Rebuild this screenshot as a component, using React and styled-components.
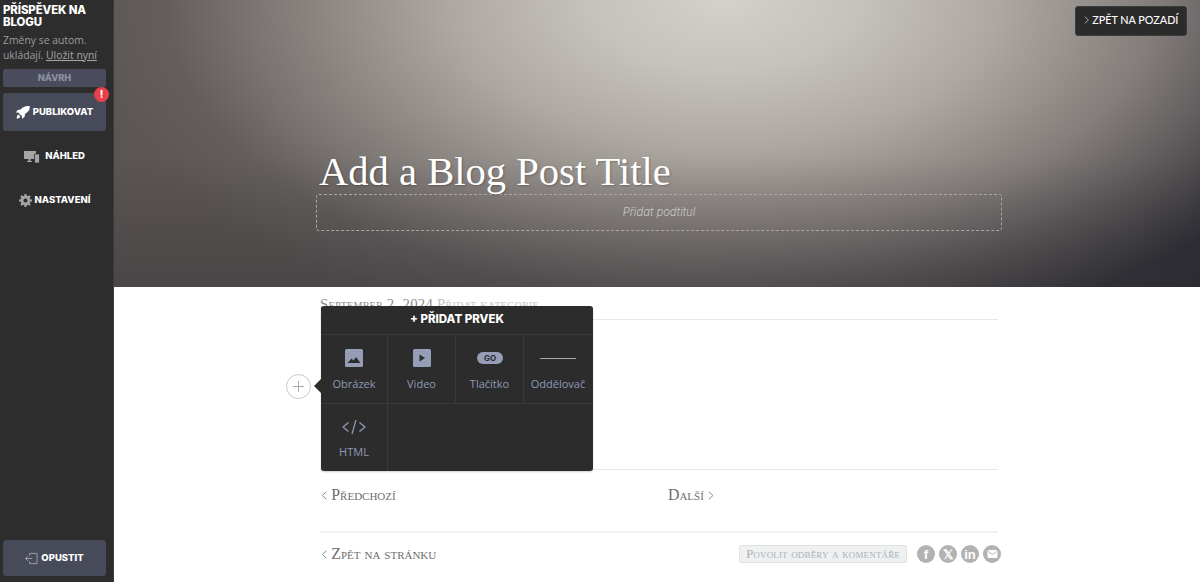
import React from "react";
import styled, { createGlobalStyle } from "styled-components";

const Global = createGlobalStyle`
  html, body { margin: 0; padding: 0; background: #fff; overflow: hidden; }
  * { box-sizing: border-box; }
`;
const Page = styled.div`display: flex; width: 1200px; height: 582px; overflow: hidden; font-family: "Open Sans", sans-serif;`;
const Sidebar = styled.aside`
  width: 114px; flex: none; background: #2d2d2d; border-right: 1px solid #3a3a3a; padding: 4px 3px 6px;
  display: flex; flex-direction: column;
`;
const SideTitle = styled.h1`
  margin: 0; font: 800 11.4px/12px Inter, sans-serif; color: #fff; letter-spacing: -0.1px;
`;
const AutoSave = styled.p`
  margin: 5px 0 0; font: 400 10.4px/14.5px "Open Sans", sans-serif; color: #9b9b9b;
  a { text-decoration: underline; color: #a5a5a5; }
`;
const Draft = styled.div`
  margin-top: 7px; height: 18px; width: 103px; border-radius: 2px; background: #4a4c5e; color: #8e92a3;
  font: 800 9.2px/18px Inter, sans-serif; text-align: center;
`;
const SideButton = styled.div`
  position: relative; width: 103px; display: flex; align-items: center; justify-content: center; gap: 3px;
  height: ${p => p.$h || 38}px; margin-top: ${p => p.$mt || 0}px; border-radius: 3px;
  background: ${p => (p.$filled ? "#474a58" : "transparent")};
  color: #fff; font: 800 9.5px/1 Inter, sans-serif;
`;
const Badge = styled.span`
  position: absolute; right: -3px; top: -6px; width: 15px; height: 15px; border-radius: 50%;
  background: #e8404a; color: #fff; font: 800 10px/15px Inter, sans-serif; text-align: center;
`;
const Spacer = styled.div`flex: 1;`;
const Main = styled.main`flex: 1; min-width: 0; display: flex; flex-direction: column;`;
const Hero = styled.section`
  position: relative; height: 287px; flex: none; padding: 150px 198px 0 202px;
  background:
    linear-gradient(180deg, rgba(40,38,44,0) 55%, rgba(40,38,44,0.32) 100%),
    radial-gradient(ellipse 650px 350px at 610px 0px, #d3d1cb 0%, #c6c2bc 20%, #aea8a2 42%, rgba(136,130,127,0.95) 66%, rgba(105,100,99,0.6) 86%, rgba(90,86,85,0) 100%),
    linear-gradient(90deg, #5b5553 0%, #5a5654 45%, #2e2e35 100%);
`;
const BackButton = styled.div`
  position: absolute; top: 6px; right: 13px; width: 112px; height: 30px; padding-bottom: 2px; border-radius: 3px;
  background: #2b2b2b; border: 1px solid #3c3c3c; color: #fff;
  display: flex; align-items: center; justify-content: center; gap: 3px;
  font: 500 10.8px/1 Lato, sans-serif;
`;
const Title = styled.h2`
  margin: 0 0 0 3px; font: 400 40.6px/44px "Liberation Serif", serif; color: #fff;
  text-shadow: 1px 1px 2px rgba(0,0,0,0.25);
`;
const Subtitle = styled.div`
  width: 686px; height: 37px; border: 1px dashed #a9a6a3; border-radius: 3px;
  text-align: center; font: italic 300 11.2px/35px Inter, sans-serif; color: #c8c6c4;
`;
const Content = styled.section`position: relative; flex: 1; padding: 0 202px 0 206px;`;
const Meta = styled.div`
  height: 33px; border-bottom: 1px solid #e8e8e8; padding-top: 9px;
  font: 400 14.8px/16px "Liberation Serif", serif; letter-spacing: 0.27px; font-variant: small-caps; color: #8d8d8d; white-space: nowrap;
  span { color: #c3c3c3; }
`;
const Body = styled.div`height: 150px; border-bottom: 1px solid #e8e8e8;`;
const PrevNext = styled.div`
  height: 63px; border-bottom: 2px solid #f0f0f0; display: grid; grid-template-columns: 347px 1fr; padding-top: 15px;
`;
const NavLink = styled.div`
  display: flex; align-items: center; gap: 4px; height: 20px; padding-left: 1px;
  font: 400 15.8px/20px "Liberation Serif", serif; font-variant: small-caps; color: #6e6e6e;
`;
const BottomRow = styled.div`display: flex; align-items: center; justify-content: space-between; height: 42px;`;
const Right = styled.div`display: flex; align-items: center; gap: 4px; margin-right: -3px;`;
const Allow = styled.div`
  height: 18px; padding: 0 6px; margin-right: 6px; background: #eff0f0; border: 1px solid #e0e2e2; border-radius: 2px;
  font: 400 13.2px/15px "Liberation Serif", serif; letter-spacing: 0.15px; font-variant: small-caps; color: #a9b2bc; white-space: nowrap;
`;
const Social = styled.span`
  width: 18px; height: 18px; border-radius: 50%; background: #b2b2b2; display: inline-flex; align-items: center; justify-content: center;
  color: #fff; font: 700 13px/1 "Liberation Sans", sans-serif;
`;
const PlusCircle = styled.div`
  position: absolute; left: 172px; top: 87px; width: 25px; height: 25px; border-radius: 50%; background: #fff; border: 1px solid #c9c9c9;
  display: flex; align-items: center; justify-content: center;
`;
const Popover = styled.div`
  position: absolute; left: 207px; top: 19px; width: 272px; height: 165px; background: #2c2c2c; border-radius: 3px; color: #8f99b8;
  box-shadow: 0 1px 2px rgba(0,0,0,.2);
  &::before {
    content: ""; position: absolute; left: -7px; top: 73px; border: 7px solid transparent; border-left: 0; border-right-color: #2c2c2c;
  }
`;
const PopTitle = styled.div`
  height: 29px; text-align: center; color: #fff; font: 800 11.5px/27px Inter, sans-serif; border-bottom: 1px solid #3a3a3e;
`;
const Grid = styled.div`display: grid; grid-template-columns: 67px 68px 68px 1fr; grid-template-rows: 69px 67px;`;
const Cell = styled.div`
  display: flex; flex-direction: column; align-items: center; border-right: 1px solid ${p => (p.$last ? "transparent" : "#3a3a3e")};
  border-bottom: 1px solid ${p => (p.$noBottom ? "transparent" : "#3a3a3e")}; padding-top: 14px;
`;
const IconBox = styled.div`height: 18px; padding-top: ${p => p.$pt || 0}px; display: flex; align-items: center; justify-content: center;`;
const CellLabel = styled.div`margin-top: ${p => p.$mt || 9}px; font: 400 11px/15px "Open Sans", sans-serif; color: #8f99b8; white-space: nowrap;`;
const Chev = ({ d = "l", c = "#8a8a8a", s = 9 }) => (
  <svg width={s * 0.7} height={s} viewBox="0 0 7 10" fill="none" stroke={c} strokeWidth="1.1">
    <path d={d === "l" ? "M6 .8 1.5 5 6 9.2" : "M1 .8 5.5 5 1 9.2"} />
  </svg>
);
const P = { fill: "#959db8" };

export default function App() {
  return (
    <Page>
      <Global />
      <Sidebar>
        <SideTitle>PŘÍSPĚVEK NA BLOGU</SideTitle>
        <AutoSave>Změny se autom. ukládají. <a>Uložit nyní</a></AutoSave>
        <Draft>NÁVRH</Draft>
        <SideButton $filled $h={38} $mt={6}>
          <svg width="14" height="13" viewBox="0 0 14 13" fill="#fff"><path d="M13.800.2C9.800-.4 6.600 1 4.700 3.600L1.500 4 0 6.500l2.800.3c.3 1 1.600 2.500 3 3l.4 3L8.500 11l.6-3.200c3-1.800 5-4 4.700-7.600zM2.400 8.600C1.300 9.200.7 10.500.6 12.500c1.900 0 3.200-.7 3.800-1.800z"/></svg>
          PUBLIKOVAT
          <Badge>!</Badge>
        </SideButton>
        <SideButton $h={44} $mt={3}>
          <svg width="16" height="13" viewBox="0 0 16 13" fill="#a5a5a5"><path d="M0 1h12v8H6.500v2H8v1H3v-1h1.500V9H0z"/><rect x="10.500" y="4" width="5" height="9" rx=".7" stroke="#2d2d2d" strokeWidth=".8"/></svg>
          <span style={{ marginLeft: 2 }}>NÁHLED</span>
        </SideButton>
        <SideButton $h={44}>
          <svg width="13" height="13" viewBox="0 0 14 14" fill="#a5a5a5"><path fillRule="evenodd" d="M6 0h2l.4 2 1.200.5L11.300 1.400l1.300 1.300-1.100 1.700.5 1.200 2 .4v2l-2 .4-.5 1.200 1.100 1.700-1.300 1.300-1.700-1.100-1.200.5-.4 2H6l-.4-2-1.200-.5-1.700 1.100-1.300-1.300 1.100-1.700-.5-1.200-2-.4V6l2-.4.5-1.200-1.100-1.700 1.300-1.300 1.700 1.100 1.200-.5zM7 4.800a2.200 2.200 0 1 0 0 4.400 2.200 2.200 0 0 0 0-4.400z"/></svg>
          NASTAVENÍ
        </SideButton>
        <Spacer />
        <SideButton $filled $h={36}>
          <svg width="13" height="13" viewBox="0 0 14 14" fill="none" stroke="#a5a5a5" strokeWidth="1"><path d="M5 4V1.500h8v11H5V10M0 7h8M3 4.500 .5 7 3 9.500"/></svg>
          OPUSTIT
        </SideButton>
      </Sidebar>
      <Main>
        <Hero>
          <BackButton><Chev d="r" c="#bbb" s={8} /> ZPĚT NA POZADÍ</BackButton>
          <Title>Add a Blog Post Title</Title>
          <Subtitle>Přidat podtitul</Subtitle>
        </Hero>
        <Content>
          <Meta>September 2, 2024 <span>Přidat kategorie</span></Meta>
          <Body />
          <PrevNext>
            <NavLink><Chev /> Předchozí</NavLink>
            <NavLink>Další <Chev d="r" /></NavLink>
          </PrevNext>
          <BottomRow>
            <NavLink><Chev /> Zpět na stránku</NavLink>
            <Right>
              <Allow>Povolit odběry a komentáře</Allow>
              <Social>f</Social>
              <Social>𝕏</Social>
              <Social>in</Social>
              <Social>
                <svg width="11" height="8" viewBox="0 0 10 8"><rect width="10" height="8" rx="1.500" fill="#fff"/><path d="M.8 1.500 5 4.500l4.200-3" stroke="#b2b2b2" fill="none"/></svg>
              </Social>
            </Right>
          </BottomRow>
          <PlusCircle>
            <svg width="11" height="11" viewBox="0 0 11 11" stroke="#aaa" strokeWidth="1"><path d="M5.500 0v11M0 5.500h11"/></svg>
          </PlusCircle>
          <Popover>
            <PopTitle>+ PŘIDAT PRVEK</PopTitle>
            <Grid>
              <Cell>
                <IconBox><svg width="18" height="18" viewBox="0 0 18 18"><rect width="18" height="18" rx="1.500" {...P}/><path d="M2.500 14 6.500 9.500l2 2 2.500-3.500 4.500 6z" fill="#2c2c2c"/></svg></IconBox>
                <CellLabel>Obrázek</CellLabel>
              </Cell>
              <Cell>
                <IconBox><svg width="18" height="18" viewBox="0 0 18 18"><rect width="18" height="18" rx="1.500" {...P}/><path d="M6.500 5.500v7l5.500-3.500z" fill="#2c2c2c"/></svg></IconBox>
                <CellLabel>Video</CellLabel>
              </Cell>
              <Cell>
                <IconBox><svg width="26" height="12" viewBox="0 0 26 12"><rect width="26" height="12" rx="6" {...P}/><text x="13" y="9" textAnchor="middle" fontFamily="Inter, sans-serif" fontWeight="700" fontSize="8" fill="#2c2c2c">GO</text></svg></IconBox>
                <CellLabel>Tlačítko</CellLabel>
              </Cell>
              <Cell $last>
                <IconBox $pt={2}><svg width="36" height="2" viewBox="0 0 36 2"><rect width="36" height="1" fill="#a9a9a9"/></svg></IconBox>
                <CellLabel>Oddělovač</CellLabel>
              </Cell>
              <Cell $noBottom>
                <IconBox><svg width="24" height="14" viewBox="0 0 24 14" fill="none" stroke="#959db8" strokeWidth="1.200"><path d="M6.500 2.500 1 7l5.500 4.500M17.500 2.500 23 7l-5.500 4.500M14 0l-4 14"/></svg></IconBox>
                <CellLabel $mt={8}>HTML</CellLabel>
              </Cell>
            </Grid>
          </Popover>
        </Content>
      </Main>
    </Page>
  );
}
